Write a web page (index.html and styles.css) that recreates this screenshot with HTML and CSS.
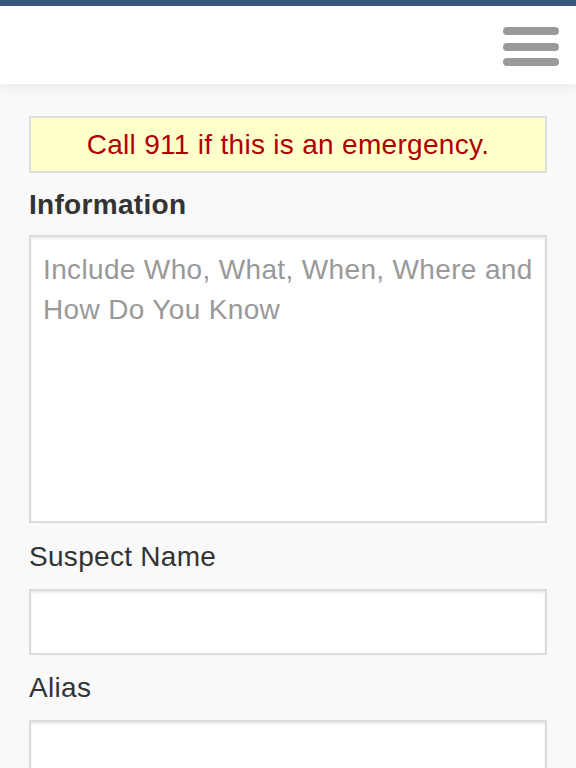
FILE: index.html
```html
<!DOCTYPE html>
<html lang="en">
<head>
<meta charset="utf-8">
<title>Submit a Tip</title>
<link rel="stylesheet" href="styles.css">
</head>
<body>
<div class="topbar"></div>
<header class="header">
  <button class="menu" aria-label="Menu">
    <span class="bar"></span>
    <span class="bar"></span>
    <span class="bar"></span>
  </button>
</header>
<main class="content">
  <div class="alert">Call 911 if this is an emergency.</div>
  <label class="label label-bold" for="info">Information</label>
  <textarea id="info" class="field textarea" placeholder="Include Who, What, When, Where and How Do You Know"></textarea>
  <label class="label" for="suspect">Suspect Name</label>
  <input id="suspect" class="field input" type="text">
  <label class="label" for="alias">Alias</label>
  <input id="alias" class="field input" type="text">
</main>
</body>
</html>
```

FILE: styles.css
```css
* { box-sizing: border-box; }
html, body { margin: 0; padding: 0; }
body {
  background: #f9f9f9;
  font-family: "Liberation Sans", Arial, sans-serif;
  font-size: 28px;
  line-height: 40px;
  letter-spacing: 0.3px;
  color: #333;
  overflow: hidden;
}
.topbar {
  height: 6px;
  background: #3b5a82;
}
.header {
  height: 78px;
  background: #fff;
  display: flex;
  justify-content: flex-end;
  align-items: flex-start;
  padding: 21px 17px 0 0;
  box-shadow: 0 3px 12px rgba(0,0,0,0.07);
  position: relative;
}
.menu {
  background: none;
  border: 0;
  padding: 0;
  width: 56px;
  display: flex;
  flex-direction: column;
  gap: 7.5px;
  cursor: pointer;
}
.bar {
  display: block;
  height: 8px;
  width: 56px;
  border-radius: 4px;
  background: #999;
}
.content {
  padding: 32px 29px 0 29px;
  display: flex;
  flex-direction: column;
}
.alert {
  background: #ffffcc;
  border: 2px solid #dedede;
  color: #b00000;
  text-align: center;
  padding: 7px 12px 6px;
  margin-bottom: 12px;
}
.label {
  display: block;
  margin-bottom: 12px;
  color: #333;
}
.label-bold {
  font-weight: bold;
  margin-bottom: 10px;
}
.field {
  display: block;
  width: 100%;
  background: #fff;
  border: 2px solid #dcdcdc;
  box-shadow: inset 0 2px 3px rgba(0,0,0,0.08);
  border-radius: 0;
  font-family: "Liberation Sans", Arial, sans-serif;
  font-size: 28px;
  line-height: 40px;
  letter-spacing: 0.35px;
  color: #333;
  padding: 11px 12px;
  margin: 0 0 13px 0;
  outline: none;
}
.textarea {
  height: 288px;
  resize: none;
  padding-top: 13px;
  margin-bottom: 14px;
}
.textarea::placeholder { color: #999; opacity: 1; }
.input { height: 66px; }
```
